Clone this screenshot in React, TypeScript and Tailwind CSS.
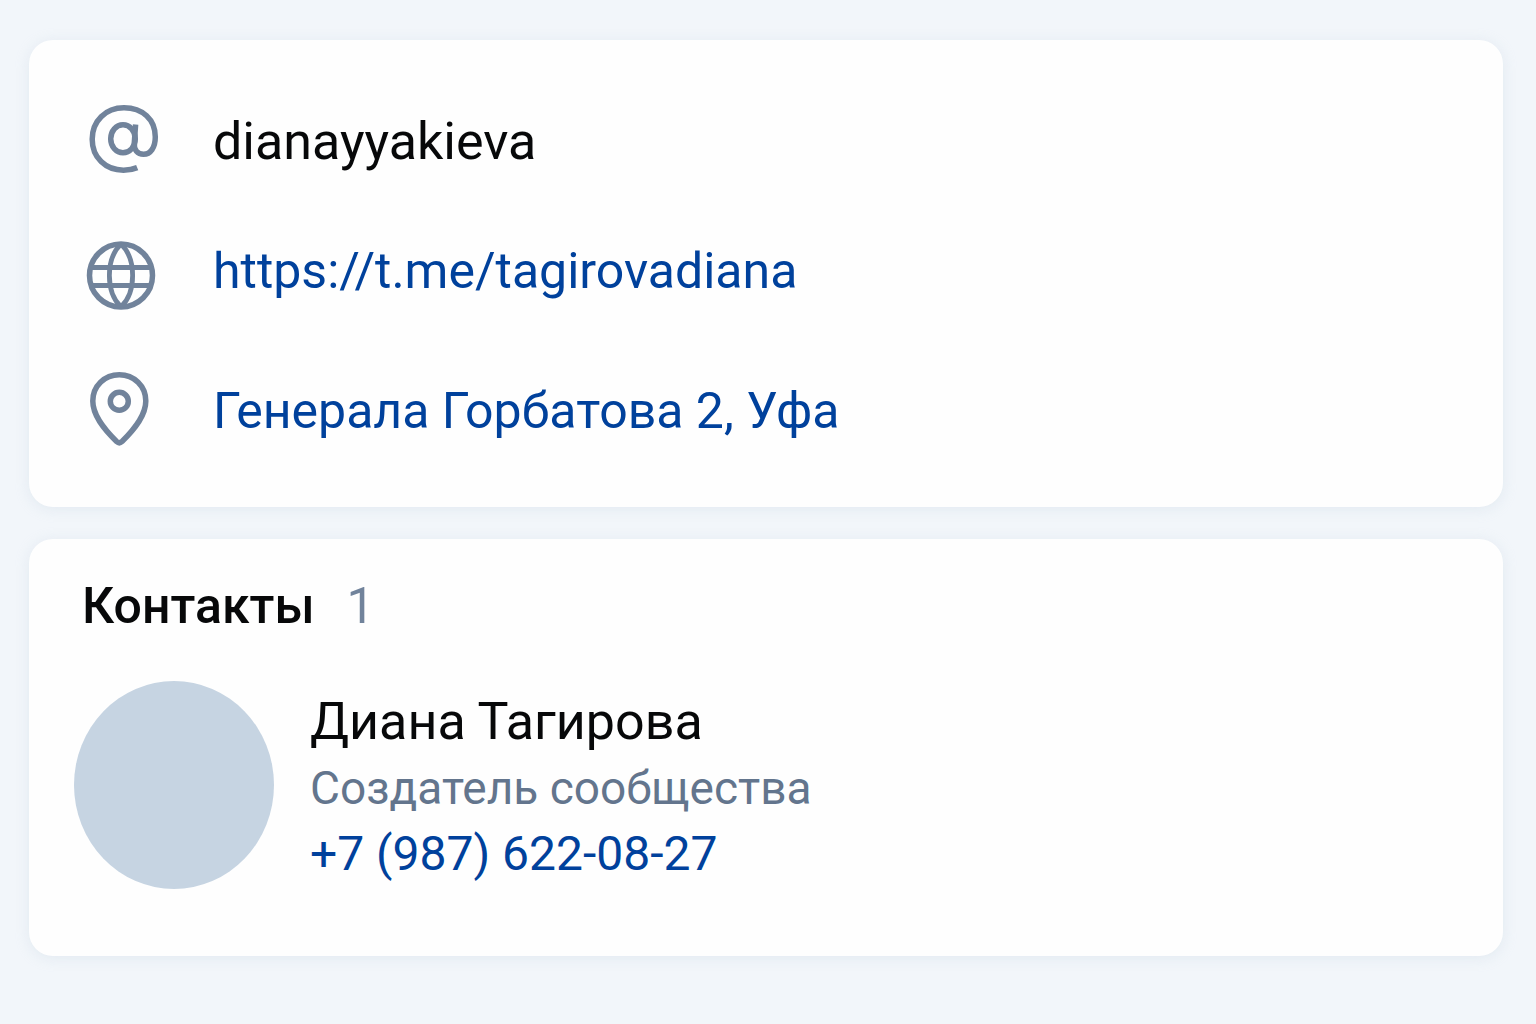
import type { ReactNode } from "react";

function Icon({ children }: { children: ReactNode }) {
  return (
    <svg
      viewBox="0 0 80 80"
      className="size-20 shrink-0 text-[#71839b]"
      fill="none"
      stroke="currentColor"
      strokeWidth="5.5"
      aria-hidden="true"
    >
      {children}
    </svg>
  );
}

function AtIcon() {
  return (
    <Icon>
      <path d="M54.2 65.6 C49.5 67.6 45 68.2 40.5 68.2 C22.5 68.2 9.2 55.5 9.2 37.2 C9.2 19 22.5 5.8 41 5.8 C59.5 5.8 72.3 17.5 72.3 35 C72.3 45.5 67.5 52.3 60.5 52.3 C54.5 52.3 50.8 48 51.3 41 L52.6 22.5" />
      <ellipse cx="40" cy="36.8" rx="12.3" ry="14" />
    </Icon>
  );
}

function GlobeIcon() {
  return (
    <Icon>
      <circle cx="38" cy="44.5" r="31.5" />
      <path d="M38 13 C22.5 28 22.5 61 38 76 M38 13 C53.5 28 53.5 61 38 76" strokeWidth="4.8" />
      <path d="M9 36.5 H67 M9 54.5 H67" strokeWidth="4.8" />
    </Icon>
  );
}

function PinIcon() {
  return (
    <Icon>
      <path
        d="M36.3 3.8 C21.5 3.8 9.8 15 9.8 30 C9.8 44 20 57 33.6 70.5 Q36.3 73 39 70.5 C52.6 57 62.8 44 62.8 30 C62.8 15 51 3.8 36.3 3.8 Z"
        strokeLinejoin="round"
      />
      <circle cx="36.3" cy="30.3" r="9" />
    </Icon>
  );
}

const card = "rounded-3xl bg-[#fefefe] shadow-[0_2px_14px_rgba(190,205,222,0.3)]";
const row = "flex items-center gap-[50px]";

export default function App() {
  return (
    <main className="flex min-h-screen flex-col gap-8 bg-[#f2f6fa] pt-10 pr-[33px] pb-17 pl-[29px] font-[Roboto,'Liberation_Sans',sans-serif] text-[50px] leading-[60px] text-[#070809]">
      <section className={`${card} px-[54px] pt-[62px] pb-14`}>
        <ul className="flex flex-col">
          <li className={row}>
            <AtIcon />
            <span className="text-[52px]">dianayyakieva</span>
          </li>
          <li className={`${row} mt-[49px]`}>
            <GlobeIcon />
            <a href="https://t.me/tagirovadiana" className="text-[#00419c]">
              https://t.me/tagirovadiana
            </a>
          </li>
          <li className={`${row} mt-[60px]`}>
            <PinIcon />
            <a href="#address" className="text-[#00419c]">
              Генерала Горбатова 2, Уфа
            </a>
          </li>
        </ul>
      </section>

      <section className={`${card} px-[45px] pt-[37px] pb-[67px]`}>
        <h2 className="flex gap-8 pl-2 font-medium">
          Контакты <span className="font-normal text-[#71839b]">1</span>
        </h2>
        <div className="mt-[45px] flex items-center gap-9">
          <div className="h-[208px] w-[200px] shrink-0 rounded-[50%] bg-[#c6d4e2]" />
          <div className="flex flex-col items-start pt-1.5">
            <h3 className="text-[52px]">Диана Тагирова</h3>
            <p className="text-[46px] leading-[72px] text-[#63758d]">Создатель сообщества</p>
            <a href="tel:+79876220827" className="text-[48px] text-[#00419c]">
              +7 (987) 622-08-27
            </a>
          </div>
        </div>
      </section>
    </main>
  );
}
